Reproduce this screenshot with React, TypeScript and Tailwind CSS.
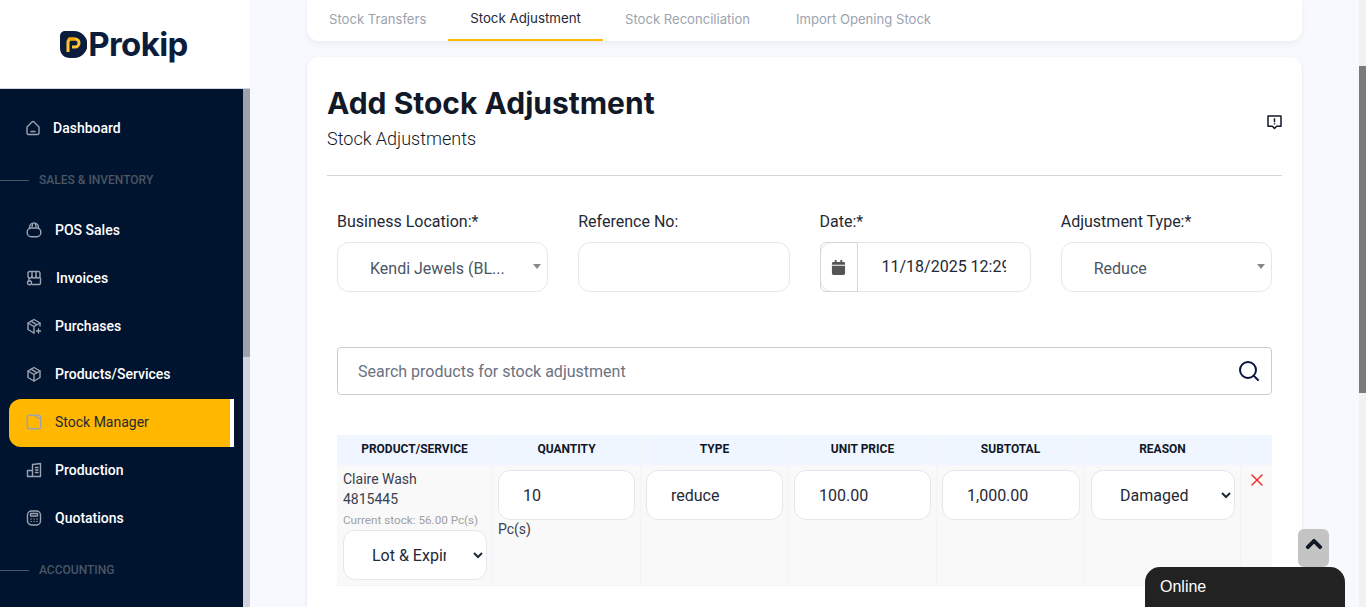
import { Search, X } from "lucide-react";
import { FaCalendar, FaChevronUp } from "react-icons/fa";

const navItems = [
  { label: "POS Sales", icon: "bag" },
  { label: "Invoices", icon: "store" },
  { label: "Purchases", icon: "boxPlus" },
  { label: "Products/Services", icon: "box" },
  { label: "Stock Manager", icon: "note", active: true },
  { label: "Production", icon: "building" },
  { label: "Quotations", icon: "calc" },
];

function NavIcon({ name }: { name: string }) {
  const common = {
    width: 16,
    height: 16,
    viewBox: "0 0 16 16",
    fill: "none",
    stroke: "currentColor",
    strokeWidth: 1.4,
    strokeLinecap: "round" as const,
    strokeLinejoin: "round" as const,
  };
  switch (name) {
    case "home":
      return (
        <svg {...common}>
          <path d="M2 7l5-5a1.5 1.5 0 012 0l5 5v6a1.5 1.5 0 01-1.5 1.5h-9A1.5 1.5 0 012 13z" />
          <path d="M6 11.5h4" />
        </svg>
      );
    case "bag":
      return (
        <svg {...common}>
          <path d="M3.5 6.5V5.5a4.5 4.5 0 019 0v1" />
          <path d="M6.5 2.5L6 4.5M9.5 2.5l.5 2" />
          <rect x="1.2" y="6" width="13.6" height="8.8" rx="4" />
        </svg>
      );
    case "store":
      return (
        <svg {...common}>
          <path d="M3 8v3M6 14.5h7a1.5 1.5 0 001.5-1.5V8" />
          <path d="M2 6V3a1.5 1.5 0 011.5-1.5h9A1.5 1.5 0 0114 3v3a2 2 0 01-4 0 2 2 0 01-4 0 2 2 0 01-4 0z" />
          <path d="M6 2v4M10 2v4" />
          <circle cx="3.5" cy="12.8" r="2" />
        </svg>
      );
    case "boxPlus":
      return (
        <svg {...common}>
          <path d="M14 8V5L8 1.5 2 5v6.5L8 15" />
          <path d="M2 5l6 3.5L14 5M8 8.5V15M5 3.2l6 3.6" />
          <path d="M12.5 11v4M10.5 13h4" />
        </svg>
      );
    case "box":
      return (
        <svg {...common}>
          <path d="M8 1.5L14 5v6.5L8 15l-6-3.5V5z" />
          <path d="M2 5l6 3.5L14 5M8 8.5V15M5 3.2l6 3.6" />
        </svg>
      );
    case "note":
      return (
        <svg {...common}>
          <path d="M4 1.2h8.5a2.2 2.2 0 012.2 2.2V12a2.8 2.8 0 01-2.8 2.8H4A2.8 2.8 0 011.2 12V4A2.8 2.8 0 014 1.2z" />
          <path d="M9.5 1.2c0 2 1.5 3 5.2 3" />
        </svg>
      );
    case "building":
      return (
        <svg {...common}>
          <path d="M1.5 14.5h13M1.5 14.5V8.5h5v6M6.5 14.5V2.5l8-1v13" />
          <path d="M9.5 5.5h2.5M9.5 8h2.5M9.5 10.5h2.5" />
        </svg>
      );
    default:
      return (
        <svg {...common}>
          <rect x="1.5" y="1" width="13" height="14" rx="4" />
          <rect x="4.5" y="3.5" width="7" height="2.5" rx="0.5" />
          <path d="M5 9h.01M8 9h.01M11 9h.01M5 11.5h.01M8 11.5h.01M11 11.5h.01" />
        </svg>
      );
  }
}

function Logo() {
  return (
    <div className="flex items-center -ml-[2px]">
      <svg width="27" height="27" viewBox="0 0 27 27">
        <path d="M0 5a5 5 0 015-5h9a13 13 0 010 27h-4C4 27 0 23 0 17z" fill="#0c1c3d" />
        <path d="M8 21V11a3 3 0 013-3h4a4 4 0 010 8h-3" fill="none" stroke="#ffc633" strokeWidth="3" />
        <path d="M8 8h7" stroke="#f5a800" strokeWidth="3" />
      </svg>
      <span className="ml-[1px] pt-[1px] text-[33px] leading-none font-bold tracking-[-0.6px] text-[#0c1c3d] font-['Inter',sans-serif]">
        Prokip
      </span>
    </div>
  );
}

function Sidebar() {
  return (
    <aside className="w-[250px] shrink-0 flex flex-col h-full">
      <div className="h-[89px] bg-white flex items-center justify-center border-b border-[#d1d5db] shrink-0">
        <Logo />
      </div>
      <div className="flex flex-1 min-h-0">
        <nav className="w-[243px] bg-[#001430] text-white overflow-hidden font-['Roboto',sans-serif] text-sm font-medium">
          <div className="h-[24px] mt-[27px] flex items-center">
            <span className="ml-[25px] text-[#9ca3af]"><NavIcon name="home" /></span>
            <span className="ml-[12px]">Dashboard</span>
          </div>
          <div className="mt-[28px] flex items-center h-[24px]">
            <span className="w-[29px] h-px bg-[#4b5563]" />
            <span className="ml-[10px] text-xs text-[#4b5563]">SALES &amp; INVENTORY</span>
          </div>
          <div className="mt-[15px] flex flex-col">
            {navItems.map((item) => (
              <div
                key={item.label}
                className={
                  item.active
                    ? "h-[48px] pb-[2px] ml-[9px] w-[225px] flex items-center bg-[#ffb700] rounded-l-xl border-r-4 border-white text-[#1f2937] font-normal"
                    : "h-[48px] pb-[2px] ml-[9px] w-[225px] flex items-center"
                }
              >
                <span className="ml-[17px] text-[#9ca3af]">
                  <NavIcon name={item.icon} />
                </span>
                <span className={item.label === "Invoices" ? "ml-[14px]" : "ml-[13px]"}>{item.label}</span>
              </div>
            ))}
          </div>
          <div className="mt-[15px] flex items-center h-[24px]">
            <span className="w-[29px] h-px bg-[#4b5563]" />
            <span className="ml-[10px] text-xs text-[#4b5563]">ACCOUNTING</span>
          </div>
        </nav>
        <div className="w-[7px] bg-[#d1d5db]">
          <div className="h-[268px] bg-[#9ca3af]" />
        </div>
      </div>
    </aside>
  );
}

function Field({ label, children }: { label: string; children: React.ReactNode }) {
  return (
    <div className="flex flex-col">
      <label className="text-base leading-[24px] text-[#1f2937] mb-[8px]">{label}</label>
      {children}
    </div>
  );
}

function FakeSelect({ value }: { value: string }) {
  return (
    <div className="h-[50px] rounded-xl border border-[#e5e7eb] bg-white flex items-center pl-[32px] pr-[6px] text-[#4b5563]">
      <span className="flex-1 truncate pt-[4px]">{value}</span>
      <span className="w-0 h-0 border-x-[4px] border-x-transparent border-t-[5px] border-t-[#888] -mt-[2px]" />
    </div>
  );
}

const inputClass =
  "h-[50px] w-full rounded-xl border border-[#e5e7eb] bg-white pl-[24px] pr-2 text-base text-[#1f2937] outline-none";

const columns = ["PRODUCT/SERVICE", "QUANTITY", "TYPE", "UNIT PRICE", "SUBTOTAL", "REASON", ""];
const gridCols = "grid grid-cols-[156px_148px_148px_148px_148px_156px_31px]";

function StockTable() {
  return (
    <div className="mt-[40px] mx-[10px] text-[#1f2937]">
      <div className={`${gridCols} h-[30px] bg-[#eff6ff]`}>
        {columns.map((c, i) => (
          <div key={i} className="flex items-center justify-center pb-[2px] text-xs font-bold text-[#111827] border-r border-[#f3f4f6] last:border-r-0">
            {c}
          </div>
        ))}
      </div>
      <div className={`${gridCols} h-[121px] bg-[#f9f9f9] border-b border-[#f3f4f6]`}>
        <div className="px-[6px] pt-[4px] border-r border-[#f3f4f6]">
          <p className="text-sm leading-[20px] text-[#374151]">Claire Wash</p>
          <p className="text-sm leading-[20px] text-[#374151]">4815445</p>
          <p className="text-[11.7px] pt-[1px] leading-[20px] text-[#a0a0a0] whitespace-nowrap">Current stock: 56.00 Pc(s)</p>
          <select className="h-[50px] w-[144px] rounded-xl border border-[#e5e7eb] bg-white px-[24px] text-base text-[#1f2937]">
            <option>Lot &amp; Expiry</option>
          </select>
        </div>
        <div className="px-[5px] pt-[5px] border-r border-[#f3f4f6]">
          <input readOnly value="10" className={inputClass} />
          <p className="text-sm leading-[18px] text-[#374151]">Pc(s)</p>
        </div>
        <div className="pl-[5px] pr-[5px] pt-[5px] border-r border-[#f3f4f6]">
          <input readOnly value="reduce" className={inputClass} />
        </div>
        <div className="pl-[5px] pr-[5px] pt-[5px] border-r border-[#f3f4f6]">
          <input readOnly value="100.00" className={inputClass} />
        </div>
        <div className="pl-[5px] pr-[4px] pt-[5px] border-r border-[#f3f4f6]">
          <input readOnly value="1,000.00" className={inputClass} />
        </div>
        <div className="pl-[6px] pr-[5px] pt-[5px] border-r border-[#f3f4f6]">
          <select className="h-[50px] w-full rounded-xl border border-[#e5e7eb] bg-white pl-[24px] text-base text-[#1f2937]">
            <option>Damaged</option>
          </select>
        </div>
        <div className="flex justify-center pt-[5px]">
          <X size={20} strokeWidth={1.8} className="text-[#ef2b2b]" />
        </div>
      </div>
    </div>
  );
}

export default function App() {
  return (
    <div className="h-[607px] w-full flex overflow-hidden bg-[#f8f9fe] font-['Roboto',sans-serif] relative">
      <Sidebar />
      <main className="w-[1109px] shrink-0 px-[57px] overflow-hidden">
        <div className="h-[41px] bg-white rounded-b-xl shadow-md shadow-gray-200/60 flex pl-[22px] text-[13.1px] leading-[20px] font-['Inter',sans-serif] font-normal">
          <div className="w-[119px] pt-[9px] text-[#9ca3af]">Stock Transfers</div>
          <div className="w-[155px] h-[41px] pt-[8px] text-center text-[13.3px] text-[#1f2937] border-b-2 border-[#ffb700]">Stock Adjustment</div>
          <div className="ml-[22px] w-[171px] pt-[9px] text-[#9ca3af]">Stock Reconciliation</div>
          <div className="pt-[9px] text-[#9ca3af]">Import Opening Stock</div>
        </div>

        <div className="mt-[16px] bg-white rounded-xl shadow-sm px-[20px] h-[600px]">
          <div className="h-[119px] flex border-b border-[#d1d5db]">
            <div className="flex-1">
              <h1 className="mt-[28px] text-[30px] leading-[36px] font-bold text-[#111827] font-['Inter',sans-serif]">Add Stock Adjustment</h1>
              <p className="mt-[6px] text-lg leading-[24px] font-light text-[#111827]">Stock Adjustments</p>
            </div>
            <svg width="15" height="15" viewBox="0 0 15 15" fill="none" stroke="#111827" strokeWidth="1.5" strokeLinejoin="round" className="mt-[58px]">
              <path d="M1 1h13v10.2H9.6l-2.1 2.3-2.1-2.3H1z" />
              <path d="M7.5 3.2v4M7.5 8.3v1.2" />
            </svg>
          </div>

          <div className="mx-[10px] mt-[34px] grid grid-cols-4 gap-x-[30px]">
            <Field label="Business Location:*">
              <FakeSelect value="Kendi Jewels (BL..." />
            </Field>
            <Field label="Reference No:">
              <input readOnly className={inputClass} />
            </Field>
            <Field label="Date:*">
              <div className="h-[50px] flex rounded-xl border border-[#e5e7eb] bg-white">
                <div className="w-[38px] -ml-px -my-px flex items-center justify-center rounded-l-md border border-[#d4d6dd] shrink-0">
                  <FaCalendar size={15} className="text-[#555]" />
                </div>
                <input readOnly value="11/18/2025 12:29" className="min-w-0 w-[124px] ml-[24px] text-base text-[#1f2937] outline-none" />
              </div>
            </Field>
            <Field label="Adjustment Type:*">
              <FakeSelect value="Reduce" />
            </Field>
          </div>

          <div className="mx-[10px] mt-[55px] h-[48px] flex items-center rounded border border-[#c9ccd3] pl-[20px] pr-[10px]">
            <span className="flex-1 pt-[2px] text-base text-[#6b7280]">Search products for stock adjustment</span>
            <Search size={24} strokeWidth={2} className="text-[#0c1440]" />
          </div>

          <StockTable />
        </div>
      </main>

      <div className="w-[7px] ml-auto bg-[#f1f1f1] h-full">
        <div className="mt-[66px] h-[327px] bg-[#7b7b7b]" />
      </div>

      <button className="absolute left-[1298px] top-[529px] w-[31px] h-[38px] rounded-md bg-[#c4c4c4] flex items-center justify-center pb-[8px]">
        <FaChevronUp size={18} stroke="currentColor" strokeWidth={30} className="text-[#111827]" />
      </button>
      <div className="absolute left-[1145px] top-[567px] w-[200px] h-[40px] rounded-t-[15px] bg-[#222] pl-[15px] pt-[10px] text-base leading-[20px] text-white font-['Liberation_Sans',sans-serif]">
        Online
      </div>
    </div>
  );
}
